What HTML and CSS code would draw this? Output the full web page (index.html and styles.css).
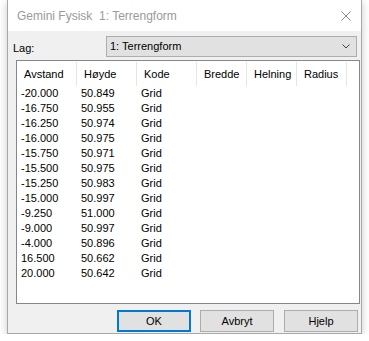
FILE: index.html
```html
<!DOCTYPE html>
<html>
<head>
<meta charset="utf-8">
<link rel="stylesheet" href="styles.css">
</head>
<body>
<div class="window">
  <div class="titlebar">
    <span class="title">Gemini Fysisk&nbsp; 1: Terrengform</span>
    <svg class="close" width="10" height="10" viewBox="0 0 10 10"><path d="M0.5 0.5 L9.5 9.5 M9.5 0.5 L0.5 9.5" stroke="#8a8a8a" stroke-width="1" fill="none"/></svg>
  </div>
  <div class="content">
    <div class="toprow">
      <span class="label">Lag:</span>
      <div class="select">
        <span>1: Terrengform</span>
        <svg class="chev" width="8" height="5" viewBox="0 0 8 5"><path d="M0.5 0.5 L4 4 L7.5 0.5" stroke="#444" stroke-width="1" fill="none"/></svg>
      </div>
    </div>
    <div class="list">
      <div class="head">
        <div class="hc w60">Avstand</div>
        <div class="hc w60">Høyde</div>
        <div class="hc w60">Kode</div>
        <div class="hc w50">Bredde</div>
        <div class="hc w50">Helning</div>
        <div class="hc w50">Radius</div>
      </div>
      <div class="row"><div class="c w60">-20.000</div><div class="c w60">50.849</div><div class="c w60">Grid</div></div>
      <div class="row"><div class="c w60">-16.750</div><div class="c w60">50.955</div><div class="c w60">Grid</div></div>
      <div class="row"><div class="c w60">-16.250</div><div class="c w60">50.974</div><div class="c w60">Grid</div></div>
      <div class="row"><div class="c w60">-16.000</div><div class="c w60">50.975</div><div class="c w60">Grid</div></div>
      <div class="row"><div class="c w60">-15.750</div><div class="c w60">50.971</div><div class="c w60">Grid</div></div>
      <div class="row"><div class="c w60">-15.500</div><div class="c w60">50.975</div><div class="c w60">Grid</div></div>
      <div class="row"><div class="c w60">-15.250</div><div class="c w60">50.983</div><div class="c w60">Grid</div></div>
      <div class="row"><div class="c w60">-15.000</div><div class="c w60">50.997</div><div class="c w60">Grid</div></div>
      <div class="row"><div class="c w60">-9.250</div><div class="c w60">51.000</div><div class="c w60">Grid</div></div>
      <div class="row"><div class="c w60">-9.000</div><div class="c w60">50.997</div><div class="c w60">Grid</div></div>
      <div class="row"><div class="c w60">-4.000</div><div class="c w60">50.896</div><div class="c w60">Grid</div></div>
      <div class="row"><div class="c w60">16.500</div><div class="c w60">50.662</div><div class="c w60">Grid</div></div>
      <div class="row"><div class="c w60">20.000</div><div class="c w60">50.642</div><div class="c w60">Grid</div></div>
    </div>
    <div class="buttons">
      <div class="btn default">OK</div>
      <div class="btn">Avbryt</div>
      <div class="btn last">Hjelp</div>
    </div>
  </div>
</div>
</body>
</html>
```
FILE: styles.css
```css
html, body {
  margin: 0;
  padding: 0;
  background: #ffffff;
}
body {
  font-family: "Liberation Sans", Arial, sans-serif;
  font-size: 11px;
  color: #000;
}
.window {
  margin-left: 7px;
  width: 355px;
  height: 334px;
  box-sizing: border-box;
  border: 1px solid #a8a8a8;
  border-top: 0;
  background: #f0f0f0;
  box-shadow: 0 2px 8px rgba(0,0,0,0.22);
  display: flex;
  flex-direction: column;
}
.titlebar {
  height: 31px;
  background: #fff;
  display: flex;
  align-items: center;
  justify-content: space-between;
  padding: 0 10px 0 9px;
  box-sizing: border-box;
}
.title {
  font-size: 12px;
  color: #9a9a9a;
}
.close {
  display: block;
}
.content {
  flex: 1;
  display: flex;
  flex-direction: column;
  padding: 0 0 0 0;
}
.toprow {
  display: flex;
  margin-top: 5px;
  height: 21px;
}
.label {
  width: 93px;
  padding-left: 5px;
  padding-top: 6px;
  line-height: 13px;
}
.select {
  width: 251px;
  height: 21px;
  box-sizing: border-box;
  border: 1px solid #adadad;
  background: #e1e1e1;
  display: flex;
  align-items: center;
  justify-content: space-between;
  padding: 0 6px 0 3px;
  line-height: 13px;
}
.chev {
  display: block;
}
.list {
  margin-top: 3px;
  margin-left: 8px;
  width: 344px;
  height: 244px;
  box-sizing: border-box;
  border: 1px solid #828790;
  background: #fff;
}
.head {
  display: flex;
  height: 25px;
  padding-top: 1px;
  box-sizing: border-box;
}
.hc {
  box-sizing: border-box;
  border-right: 1px solid #e5e5e5;
  padding-left: 7px;
  line-height: 24px;
  height: 24px;
}
.w60 { width: 60px; }
.w50 { width: 50px; }
.row {
  display: flex;
  height: 15px;
  line-height: 15px;
}
.c {
  padding-left: 4px;
  box-sizing: border-box;
}
.buttons {
  display: flex;
  justify-content: flex-end;
  margin-top: 6px;
  padding-right: 3px;
}
.btn {
  width: 74px;
  height: 22px;
  box-sizing: border-box;
  border: 1px solid #adadad;
  background: #e1e1e1;
  text-align: center;
  line-height: 20px;
  margin-left: 9px;
}
.btn.default {
  border: 2px solid #0078d7;
  line-height: 18px;
}
.btn.last {
  margin-left: 10px;
}
```
